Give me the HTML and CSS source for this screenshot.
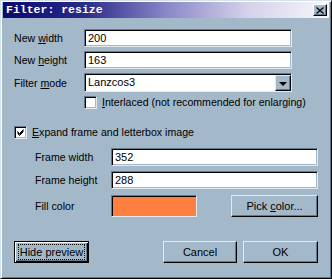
FILE: index.html
```html
<!DOCTYPE html>
<html>
<head>
<meta charset="utf-8">
<link rel="stylesheet" href="styles.css">
</head>
<body>
<div class="window">
  <div class="titlebar">
    <span class="title">Filter: resize</span>
    <span class="close"><svg width="8" height="7" viewBox="0 0 8 7"><path d="M0.5 0.5 L7.5 6.5 M7.5 0.5 L0.5 6.5" stroke="#000" stroke-width="1.3" fill="none"/></svg></span>
  </div>
  <div class="content">
    <div class="row r1">
      <span class="lbl">New <u>w</u>idth</span>
      <div class="field">200</div>
    </div>
    <div class="row r2">
      <span class="lbl">New <u>h</u>eight</span>
      <div class="field">163</div>
    </div>
    <div class="row r3">
      <span class="lbl">Filter <u>m</u>ode</span>
      <div class="select">
        <span class="select-text">Lanzcos3</span>
        <span class="dd-btn"><span class="tri"></span></span>
      </div>
    </div>
    <div class="row r4">
      <span class="cb"></span>
      <span class="cb-text"><u>I</u>nterlaced (not recommended for enlarging)</span>
    </div>
    <div class="row r5">
      <span class="cb"><svg width="9" height="9" viewBox="0 0 9 9"><path d="M1.5 3.5 L3.5 5.5 L7.5 1.5 M1.5 4.5 L3.5 6.5 L7.5 2.5 M1.5 5.5 L3.5 7.5 L7.5 3.5" stroke="#000" stroke-width="1" fill="none"/></svg></span>
      <span class="cb-text"><u>E</u>xpand frame and letterbox image</span>
    </div>
    <div class="row frame r6">
      <span class="lbl2">Frame width</span>
      <div class="field field2">352</div>
    </div>
    <div class="row frame r7">
      <span class="lbl2">Frame height</span>
      <div class="field field2">288</div>
    </div>
    <div class="row frame r8">
      <span class="lbl2">Fill color</span>
      <div class="swatch"></div>
      <div class="btn pick"><span>Pick <u>c</u>olor...</span></div>
    </div>
    <div class="row r9">
      <div class="btn default"><span class="focus">Hide preview</span></div>
      <div class="btn cancel"><span>Cancel</span></div>
      <div class="btn ok"><span>OK</span></div>
    </div>
  </div>
</div>
</body>
</html>
```
FILE: styles.css
```css
* { box-sizing: border-box; }
html, body { margin: 0; padding: 0; background: #a3b8c8; }
body {
  font-family: "Liberation Sans", Arial, sans-serif;
  font-size: 10.6px;
  color: #000;
}
u { text-decoration: underline; text-underline-offset: 1px; }
.window {
  width: 332px;
  height: 279px;
  background: #a3b8c8;
  border: 1px solid;
  border-color: #d4e0ea #000 #000 #d4e0ea;
  box-shadow: inset 1px 1px #fff, inset -1px -1px #66798a;
  padding: 1px 2px 0 2px;
}
.titlebar {
  height: 16px;
  display: flex;
  align-items: center;
  justify-content: space-between;
  background: linear-gradient(to right, #0a0a6e 0%, #2a2a88 25%, #8a86c8 50%, #d4d2ea 75%, #f6f6fb 100%);
  padding: 0 2px 0 3px;
}
.title {
  color: #fff;
  font-family: "Liberation Mono", monospace;
  font-weight: bold;
  font-size: 11.5px;
  line-height: 16px;
}
.close {
  width: 14px;
  height: 12px;
  background: #a3b8c8;
  border: 1px solid;
  border-color: #fff #000 #000 #fff;
  box-shadow: inset -1px -1px #66798a;
  display: flex;
  align-items: center;
  justify-content: center;
}
.content { padding: 11px 0 0 11px; }
.row { display: flex; align-items: center; }
.lbl { width: 70px; }
.field {
  width: 208px;
  height: 18px;
  background: #fff;
  border: 1px solid;
  border-color: #66798a #e2eaf0 #e2eaf0 #66798a;
  box-shadow: inset 1px 1px #000, inset -1px -1px #a3b8c8;
  padding-left: 3px;
  line-height: 16px;
  font-size: 11px;
}
.r2 { margin-top: 4px; }
.r3 { margin-top: 4px; }
.select {
  width: 208px;
  height: 19px;
  background: #fff;
  border: 1px solid;
  border-color: #66798a #e2eaf0 #e2eaf0 #66798a;
  box-shadow: inset 1px 1px #000;
  display: flex;
  align-items: flex-start;
}
.select-text {
  flex: 1;
  padding-left: 3px;
  line-height: 17px;
  font-size: 11px;
}
.dd-btn {
  width: 16px;
  height: 16px;
  margin-top: 1px;
  background: #a3b8c8;
  border: 1px solid;
  border-color: #e2eaf0 #000 #000 #e2eaf0;
  box-shadow: inset -1px -1px #66798a;
  display: flex;
  align-items: center;
  justify-content: center;
}
.tri {
  width: 0; height: 0;
  border-left: 4px solid transparent;
  border-right: 4px solid transparent;
  border-top: 4px solid #000;
  margin-top: 1px;
}
.cb {
  width: 13px;
  height: 13px;
  background: #fff;
  border: 1px solid;
  border-color: #66798a #e2eaf0 #e2eaf0 #66798a;
  box-shadow: inset 1px 1px #000, inset -1px -1px #a3b8c8;
  display: flex;
  align-items: center;
  justify-content: center;
  flex: none;
}
.cb-text { margin-left: 5px; line-height: 13px; }
.r4 { margin-top: 4px; padding-left: 70px; height: 13px; }
.r5 { margin-top: 17px; height: 13px; }
.frame { padding-left: 21px; }
.lbl2 { width: 76px; }
.field2 { width: 207px; }
.r6 { margin-top: 9px; }
.r7 { margin-top: 5px; }
.r8 { margin-top: 6px; }
.swatch {
  width: 86px;
  height: 22px;
  background: #ff7f40;
  border: 1px solid;
  border-color: #66798a #e2eaf0 #e2eaf0 #66798a;
  box-shadow: inset 1px 1px #000;
}
.btn {
  height: 22px;
  background: #a3b8c8;
  border: 1px solid;
  border-color: #e2eaf0 #000 #000 #e2eaf0;
  box-shadow: inset -1px -1px #66798a;
  display: flex;
  align-items: center;
  justify-content: center;
  font-size: 11px;
  white-space: nowrap;
}
.pick { width: 87px; margin-left: 34px; }
.r9 { margin-top: 24px; }
.default {
  width: 75px;
  border-color: #000;
  box-shadow: inset 1px 1px #fff, inset -1px -1px #000, inset -2px -2px #66798a;
}
.focus {
  border: 1px dotted #000;
  padding: 0 1px;
  line-height: 14px;
}
.cancel { width: 74px; margin-left: 74px; }
.ok { width: 75px; margin-left: 6px; }
```
